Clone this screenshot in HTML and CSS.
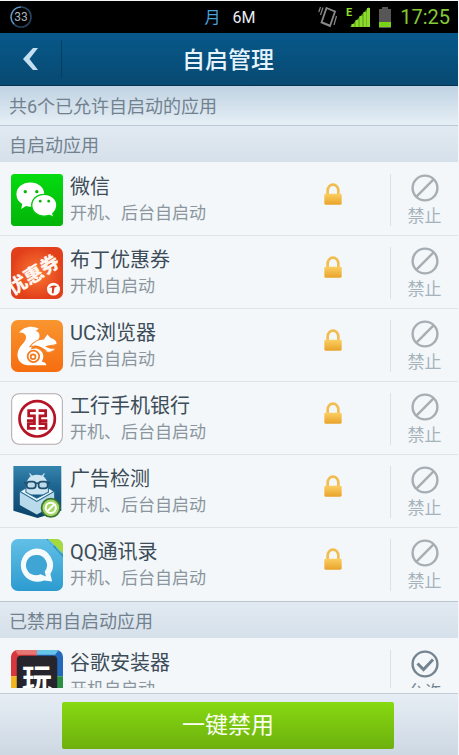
FILE: index.html
```html
<!DOCTYPE html>
<html lang="zh-CN">
<head>
<meta charset="utf-8">
<meta name="viewport" content="width=device-width, initial-scale=1">
<title>自启管理</title>
<link rel="stylesheet" href="styles.css">
</head>
<body>
<svg class="defs" aria-hidden="true">
  <defs>
    <linearGradient id="gold" x1="0" y1="0" x2="0" y2="1"><stop offset="0" stop-color="#fbcf62"/><stop offset="1" stop-color="#e9a32a"/></linearGradient>
    <linearGradient id="green" x1="0" y1="0" x2="0" y2="1"><stop offset="0" stop-color="#04dc10"/><stop offset="1" stop-color="#03b409"/></linearGradient>
    <radialGradient id="red"><stop offset="0" stop-color="#fb7a35"/><stop offset="1" stop-color="#e2401b"/></radialGradient>
    <linearGradient id="orange" x1="0" y1="0" x2="0" y2="1"><stop offset="0" stop-color="#f9962f"/><stop offset="1" stop-color="#f66d10"/></linearGradient>
    <linearGradient id="navy" x1="0" y1="0" x2="0" y2="1"><stop offset="0" stop-color="#3585ae"/><stop offset=".4" stop-color="#1d6590"/><stop offset="1" stop-color="#0b4268"/></linearGradient>
    <linearGradient id="sky" x1="0" y1="0" x2="0" y2="1"><stop offset="0" stop-color="#62c0e6"/><stop offset="1" stop-color="#2d9bd0"/></linearGradient>
    <symbol id="lock" viewBox="0 0 54 66">
      <path d="M11 34V22a16 17 0 0 1 32 0v12" fill="none" stroke="#f2bd50" stroke-width="8"/>
      <rect x="1" y="32" width="52" height="33" rx="4" fill="url(#gold)"/>
    </symbol>
    <symbol id="ban" viewBox="0 0 28 28">
      <g fill="none" stroke="#a6adb3" stroke-width="2.4"><circle cx="14" cy="14" r="12.4"/><path d="M5.2 22.8 22.8 5.2"/></g>
    </symbol>
    <clipPath id="tile"><rect width="153" height="153" rx="20"/></clipPath>
  </defs>
</svg>

<div class="status">
  <svg class="ring" viewBox="0 0 22 22" role="img" aria-label="33">
    <circle cx="11" cy="11" r="10" fill="none" stroke="#27425e" stroke-width="1.6"/>
    <path d="M11 1A10 10 0 0 0 4 18" fill="none" stroke="#6ba0cc" stroke-width="1.2"/>
    <text x="11" y="15" text-anchor="middle" class="ring-text">33</text>
  </svg>
  <div class="traffic"><span class="month">月</span><span>6M</span></div>
  <div class="indicators">
    <svg class="vibrate" viewBox="0 0 20 22" aria-hidden="true">
      <g fill="none" stroke="#8a8a8a" stroke-width="1.8"><path d="M8.500 2 17 5.500 12 20 3.500 16.500Z"/><path d="M5 1.500 2.500 9M2.500 1 .8 6M18.500 10l-2.500 9M4 16l7.500 3" stroke-width="1.200"/></g>
    </svg>
    <svg class="signal" viewBox="0 0 24 22" aria-hidden="true">
      <text x="0" y="10" class="edge">E</text>
      <path d="M23 1v20H4Z" fill="#4f9c18"/>
      <path d="M7 18v3M11 14v7M15 10v11M19 6v15M22.500 2v19" stroke="#8fdc2c" stroke-width="3"/>
    </svg>
    <svg class="battery" viewBox="0 0 14 21" aria-hidden="true">
      <path d="M4 0h6v2h3v19H1V2h3Z" fill="#565656"/><path d="M1 15h12v5H1Z" fill="#79d216"/>
    </svg>
    <time>17:25</time>
  </div>
</div>

<header class="bar">
  <button class="back" type="button" aria-label="返回">
    <svg viewBox="0 0 16 22" aria-hidden="true"><path d="M15 0H10L0 11l10 11h5L6.500 11Z" fill="#c5dff0"/></svg>
  </button>
  <h1>自启管理</h1>
</header>

<main class="list">
  <p class="summary">共6个已允许自启动的应用</p>
  <h2>自启动应用</h2>
  <ul>
    <li>
      <svg class="app" viewBox="0 0 153 153" aria-hidden="true">
        <rect width="153" height="153" rx="10" fill="url(#green)"/>
        <path d="M57 25c23 0 41 14 41 35S80 96 57 96c-5 0-9-1-13-2l-14 9 3-15C22 81 16 72 16 60c0-21 18-35 41-35Z" fill="#fff"/>
        <path d="M98 60c21 0 37 14 37 32 0 10-5 18-12 24l3 11-13-5c-5 1-10 2-15 2-21 0-37-14-37-32s16-32 37-32Z" fill="#fff" stroke="#05c70c" stroke-width="4"/>
        <g fill="#08b60d"><circle cx="42" cy="52" r="5"/><circle cx="76" cy="52" r="5"/><circle cx="86" cy="80" r="4"/><circle cx="111" cy="80" r="4"/></g>
      </svg>
      <div class="info"><h3>微信</h3><p>开机、后台自启动</p></div>
      <svg class="lock" aria-hidden="true"><use href="#lock"/></svg>
      <button class="action" type="button"><svg aria-hidden="true"><use href="#ban"/></svg>禁止</button>
    </li>
    <li>
      <svg class="app" viewBox="0 0 153 153" aria-hidden="true">
        <g clip-path="url(#tile)">
          <rect width="153" height="153" fill="url(#red)"/>
          <text x="6" y="143" transform="rotate(-32 6 143)" class="coupon">优惠券</text>
        </g>
        <circle cx="125" cy="124" r="19" fill="#fff"/>
        <path d="M112 120q12-11 24-3l-8 2-3 18-5-1 1-17Z" fill="#d93a19"/>
      </svg>
      <div class="info"><h3>布丁优惠券</h3><p>开机自启动</p></div>
      <svg class="lock" aria-hidden="true"><use href="#lock"/></svg>
      <button class="action" type="button"><svg aria-hidden="true"><use href="#ban"/></svg>禁止</button>
    </li>
    <li>
      <svg class="app" viewBox="0 0 153 153" aria-hidden="true">
        <rect width="153" height="153" rx="20" fill="url(#orange)"/>
        <path d="M82 26C62 14 36 20 24 37c12-1 22 5 20 17-2 14-25 24-25 50 1 20 17 30 33 29h52c-1-8-8-9-14-11 8-10 7-24-4-33-8-7-18-6-27-2-1-13 25-23 25-41 0-9-6-14-12-14Z" fill="#fff"/>
        <path d="M56 78c14-18 28-22 40-22 2-6 8-10 12-17 4 8 8 13 16 15 8 4 13 10 11 17-9 5-23 3-31 7 8 5 18 6 28 5-6 13-22 15-34 8-12-10-26-16-42-13Z" fill="#fff" stroke="#f8822a" stroke-width="3"/>
        <path d="M68 77c16-2 28 10 36 15" fill="none" stroke="#f57819" stroke-width="4"/>
        <circle cx="66" cy="107" r="17" fill="#fff" stroke="#f57819" stroke-width="5"/>
        <circle cx="65" cy="108" r="7" fill="none" stroke="#f57819" stroke-width="5"/>
      </svg>
      <div class="info"><h3>UC浏览器</h3><p>后台自启动</p></div>
      <svg class="lock" aria-hidden="true"><use href="#lock"/></svg>
      <button class="action" type="button"><svg aria-hidden="true"><use href="#ban"/></svg>禁止</button>
    </li>
    <li>
      <svg class="app" viewBox="0 0 153 153" aria-hidden="true">
        <rect x="2" y="2" width="149" height="149" rx="22" fill="#fff" stroke="#b3a9ad" stroke-width="3"/>
        <g fill="none" stroke="#b51424" stroke-width="8">
          <circle cx="77" cy="76" r="52"/>
          <path d="M73 52H52v15h17v14H47M69 81v9H51v14h22M81 52h21v15H85v14h22M85 81v9h18v14H81"/>
        </g>
      </svg>
      <div class="info"><h3>工行手机银行</h3><p>开机、后台自启动</p></div>
      <svg class="lock" aria-hidden="true"><use href="#lock"/></svg>
      <button class="action" type="button"><svg aria-hidden="true"><use href="#ban"/></svg>禁止</button>
    </li>
    <li>
      <svg class="app" viewBox="0 0 153 153" aria-hidden="true">
        <path d="M7 0h141v132l-70 21-71-21Z" fill="url(#navy)"/>
        <path d="M44 62c0-14 6-26 14-32l-5-8 3-1 6 7q14-5 29 0l6-7 3 1-5 8c9 7 14 18 14 32v22H44Z" fill="#cde6f2"/>
        <path d="m26 75 50 29 51-29v40l-51 28-50-28Z" fill="#b9daea"/>
        <path d="m26 75 18-11v13l32 18 34-18V64l17 11-51 29Z" fill="#e9f5fa" stroke="#266b94" stroke-width="3"/>
        <g fill="#bddbea" stroke="#20506f" stroke-width="5"><rect x="46" y="46" width="27" height="20" rx="9"/><rect x="81" y="46" width="27" height="20" rx="9"/><path d="M73 52q4-3 8 0M46 52l-8-4M108 52l7-4"/></g>
        <circle cx="117" cy="123" r="27" fill="#a5d765" stroke="#3b7337" stroke-width="5"/>
        <g fill="none" stroke="#fff" stroke-width="6"><circle cx="117" cy="123" r="15"/><path d="m107 133 21-21"/></g>
      </svg>
      <div class="info"><h3>广告检测</h3><p>开机、后台自启动</p></div>
      <svg class="lock" aria-hidden="true"><use href="#lock"/></svg>
      <button class="action" type="button"><svg aria-hidden="true"><use href="#ban"/></svg>禁止</button>
    </li>
    <li>
      <svg class="app" viewBox="0 0 153 153" aria-hidden="true">
        <g clip-path="url(#tile)">
          <rect width="153" height="153" fill="url(#sky)"/>
          <path d="M108 0q6 22 22 20 8 18 23 26v8L104 0Z" fill="#318fb5"/>
          <path d="M110 0h43v43Z" fill="#a5da3a"/>
        </g>
        <path d="M75 28a49 49 0 0 1 41 75l5 22-24-3a49 49 0 1 1-22-94Z" fill="#f5fafc"/>
        <path d="M75 47a30 30 0 0 1 24 49l4 14-16-6a30 30 0 1 1-12-57Z" fill="#3ea5d5"/>
      </svg>
      <div class="info"><h3>QQ通讯录</h3><p>开机、后台自启动</p></div>
      <svg class="lock" aria-hidden="true"><use href="#lock"/></svg>
      <button class="action" type="button"><svg aria-hidden="true"><use href="#ban"/></svg>禁止</button>
    </li>
  </ul>
  <h2>已禁用自启动应用</h2>
  <ul>
    <li>
      <svg class="app" viewBox="0 0 153 153" aria-hidden="true">
        <g clip-path="url(#tile)">
          <path d="M0 0h76v77H0Z" fill="#d8383c"/><path d="M76 0h77v77H76Z" fill="#2569bd"/>
          <path d="M12 0h64v14H20Z" fill="#e87672"/><path d="M76 0h64l-10 14H76Z" fill="#66c4e9"/>
          <path d="M0 77h76v76H0Z" fill="#f3b61d"/><path d="M76 77h77v76H76Z" fill="#2b9040"/>
        </g>
        <rect x="17" y="17" width="119" height="119" rx="12" fill="#26252d"/>
        <text x="76" y="118" text-anchor="middle" class="play">玩</text>
      </svg>
      <div class="info"><h3>谷歌安装器</h3><p>开机自启动</p></div>
      <button class="action allow" type="button">
        <svg viewBox="0 0 28 28" aria-hidden="true"><g fill="none" stroke="#748390"><circle cx="14" cy="14" r="12.400" stroke-width="2.400"/><path d="m6.500 13.500 6 6 9.500-10" stroke-width="3"/></g></svg>允许
      </button>
    </li>
  </ul>
</main>

<footer><button class="disable" type="button">一键禁用</button></footer>
</body>
</html>
```
FILE: styles.css
```css
* { box-sizing: border-box; margin: 0; padding: 0; }

body {
  display: flex;
  flex-direction: column;
  height: 100vh;
  padding: 1px 1px 0 0;
  background: #f3f7f9;
  font-family: Roboto, "Noto Sans CJK SC", sans-serif;
  color: #3c4c58;
}

button { border: 0; background: none; font: inherit; cursor: pointer; }
ul { list-style: none; }
svg { display: block; flex: none; }
.defs { position: absolute; width: 0; height: 0; }

.status {
  display: grid;
  grid-template-columns: 1fr auto 1fr;
  align-items: center;
  flex: none;
  height: 32px;
  padding: 0 8px 0 10px;
  background: #000;
  color: #e8eef2;
}
.ring { width: 22px; height: 22px; }
.ring-text { font-size: 12px; fill: #a9b4bd; }
.traffic { display: flex; align-items: center; gap: 12px; padding-top: 2px; font-size: 16px; line-height: 20px; }
.month { color: #4aa3df; }
.indicators { display: flex; justify-content: flex-end; align-items: center; gap: 8px; }
.vibrate { width: 20px; height: 22px; }
.signal { width: 24px; height: 22px; }
.edge { font-size: 11px; font-weight: 700; fill: #8fdc2c; }
.battery { width: 14px; height: 21px; }
.status time { font-size: 20px; line-height: 24px; color: #86c936; }

.bar {
  display: grid;
  grid-template-columns: 62px 1fr 64px;
  align-items: center;
  flex: none;
  height: 53px;
  background: linear-gradient(#07588a, #084a72);
  border-bottom: 1px solid #06334f;
}
.back {
  display: flex;
  justify-content: center;
  align-items: center;
  height: 38px;
  border-right: 1px solid #063e62;
}
.back svg { width: 16px; height: 22px; }
h1 { padding-top: 4px; font-size: 23px; line-height: 32px; font-weight: 500; color: #e6f4fd; text-align: center; }

.list { flex: 1; min-height: 0; margin-bottom: 5px; overflow: hidden; }
.summary, h2 {
  padding: 0 9px;
  font-size: 18px;
  font-weight: 400;
  color: #72818e;
}
.summary {
  height: 40px;
  line-height: 42px;
  background: linear-gradient(#bfd2e2, #e6eff6);
  border-bottom: 1px solid #b9cad7;
}
h2 { height: 36px; line-height: 40px; background: linear-gradient(#e1eaf2, #d6e0ea); }

li {
  display: flex;
  align-items: flex-start;
  height: 73px;
  padding: 11px 0 0 11px;
  border-bottom: 1px solid #dde3e8;
}
li:first-child { height: 74px; padding-top: 12px; }
ul:not(:last-child) li:last-child { height: 74px; border-bottom-color: #bcc6ce; }
.app { width: 52px; height: 52px; }
.info { flex: 1; min-width: 0; padding-left: 7px; }
h3 { font-size: 20px; line-height: 26px; font-weight: 400; }
.info p { font-size: 17px; line-height: 26px; color: #8a959e; }
.lock { width: 18px; height: 22px; margin: 9px 48px 0 0; }
.action {
  display: flex;
  flex-direction: column;
  align-items: center;
  width: 68px;
  height: 52px;
  border-left: 1px solid #dbe1e5;
  font-size: 17px;
  line-height: 28px;
  color: #a6b2bc;
}
.action svg { width: 28px; height: 28px; }
.allow { color: #748390; }
.coupon { font-size: 56px; font-weight: 900; fill: #fff5ee; }
.play { font-size: 88px; font-weight: 700; fill: #fff; }

footer {
  display: flex;
  justify-content: center;
  flex: none;
  height: 62px;
  padding: 8px 64px 6px 62px;
  background: linear-gradient(#e6edf4, #cdd8e3);
  border-top: 1px solid #c5ced6;
}
.disable {
  flex: 1;
  height: 47px;
  border-radius: 2px;
  background: linear-gradient(#87d911, #6db00e);
  color: #fbfff3;
  font-size: 23px;
  line-height: 47px;
}
```
